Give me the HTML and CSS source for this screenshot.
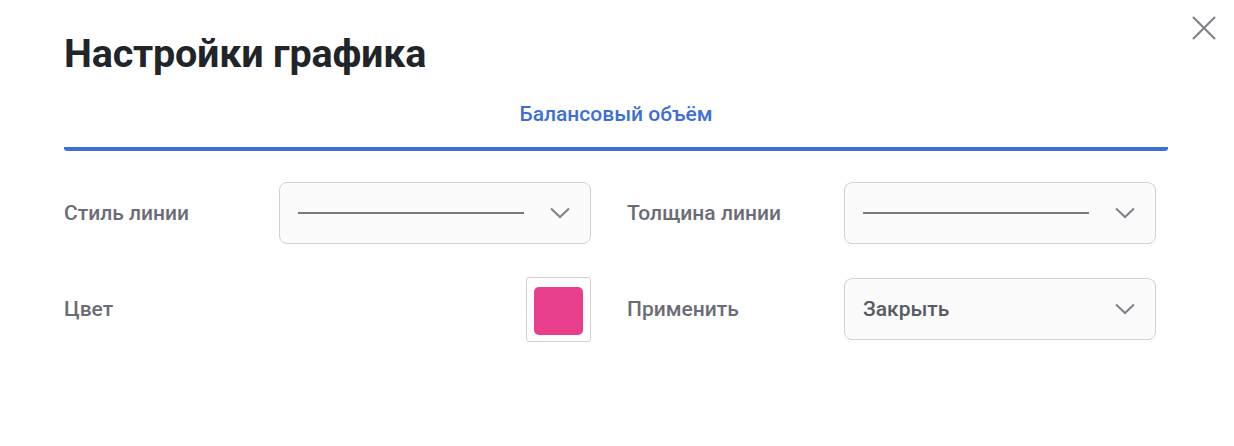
FILE: index.html
```html
<!DOCTYPE html>
<html lang="ru">
<head>
<meta charset="utf-8">
<title>Настройки графика</title>
<link rel="stylesheet" href="styles.css">
</head>
<body>
<div class="modal">
  <button class="close" aria-label="Закрыть">
    <svg width="24" height="24" viewBox="0 0 24 24"><path d="M1 1 L23 23 M23 1 L1 23" stroke="#7d8089" stroke-width="2" fill="none"/></svg>
  </button>
  <h1 class="title">Настройки графика</h1>
  <div class="tabs">
    <div class="tab">Балансовый объём</div>
  </div>
  <div class="form">
    <div class="field">
      <div class="label">Стиль линии</div>
      <div class="select">
        <span class="line"></span>
        <svg class="chev" width="20" height="12" viewBox="0 0 20 12"><path d="M1 1.5 L10 10 L19 1.5" stroke="#7d8089" stroke-width="2" fill="none"/></svg>
      </div>
    </div>
    <div class="field">
      <div class="label">Толщина линии</div>
      <div class="select">
        <span class="line thin"></span>
        <svg class="chev" width="20" height="12" viewBox="0 0 20 12"><path d="M1 1.5 L10 10 L19 1.5" stroke="#7d8089" stroke-width="2" fill="none"/></svg>
      </div>
    </div>
    <div class="field">
      <div class="label">Цвет</div>
      <div class="color-wrap">
        <div class="color-box"><span class="swatch"></span></div>
      </div>
    </div>
    <div class="field">
      <div class="label">Применить</div>
      <div class="select short">
        <span class="value">Закрыть</span>
        <svg class="chev" width="20" height="12" viewBox="0 0 20 12"><path d="M1 1.5 L10 10 L19 1.5" stroke="#7d8089" stroke-width="2" fill="none"/></svg>
      </div>
    </div>
  </div>
</div>
</body>
</html>
```
FILE: styles.css
```css
html, body {
  margin: 0;
  padding: 0;
  background: #ffffff;
}
body {
  font-family: Roboto, "Liberation Sans", Arial, sans-serif;
  width: 1234px;
  height: 446px;
  overflow: hidden;
}
.modal {
  position: relative;
  padding: 31px 66px 0 64px;
}
.close {
  position: absolute;
  top: 16px;
  right: 18px;
  width: 24px;
  height: 24px;
  padding: 0;
  border: 0;
  background: transparent;
  display: block;
}
.close svg { display: block; }
.title {
  margin: 0;
  font-size: 39.5px;
  line-height: 46px;
  font-weight: 700;
  color: #212529;
  letter-spacing: -0.2px;
}
.tabs {
  margin-top: 25px;
}
.tab {
  text-align: center;
  font-size: 21px;
  line-height: 24px;
  font-weight: 500;
  color: #3d6fd6;
  padding-bottom: 21px;
  border-bottom: 4px solid #3d6fd6;
  border-radius: 0 0 3px 3px;
}
.form {
  display: grid;
  grid-template-columns: 527px 529px;
  column-gap: 36px;
  row-gap: 34px;
  margin-top: 31px;
}
.field {
  display: flex;
  align-items: center;
  height: 62px;
}
.label {
  flex: 1;
  font-size: 21px;
  font-weight: 500;
  color: #6a6d76;
}
.select {
  box-sizing: border-box;
  width: 312px;
  height: 62px;
  border: 1px solid #d2d2d6;
  border-radius: 8px;
  background: #fbfbfb;
  display: flex;
  align-items: center;
  padding: 0 20px 0 18px;
}
.line {
  width: 226px;
  height: 2.5px;
  background: #7a7a7a;
}
.line.thin {
  height: 2px;
}
.chev {
  margin-left: auto;
  display: block;
}
.value {
  font-size: 21px;
  font-weight: 500;
  color: #585b63;
}
.color-wrap {
  width: 312px;
  display: flex;
  justify-content: flex-end;
}
.color-box {
  width: 65px;
  height: 65px;
  box-sizing: border-box;
  border: 1px solid #d2d2d6;
  border-radius: 3px;
  padding: 9px 7px 7px 7px;
}
.swatch {
  display: block;
  width: 49px;
  height: 48px;
  border-radius: 5px;
  background: #e83e8c;
}
```
